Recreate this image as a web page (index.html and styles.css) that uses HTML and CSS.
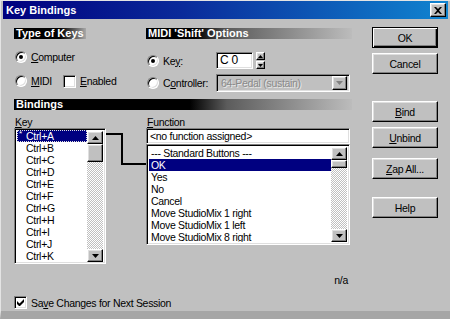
FILE: index.html
```html
<!DOCTYPE html>
<html>
<head>
<meta charset="utf-8">
<link rel="stylesheet" href="styles.css">
</head>
<body>
<div class="window">
  <div class="titlebar">
    <span class="title">Key Bindings</span>
    <span class="close raised"><svg width="8" height="7" viewBox="0 0 8 7"><path d="M0 0h2l2 2 2-2h2L5 3.5 8 7H6L4 5 2 7H0l3-3.5z" fill="#000"/></svg></span>
  </div>
  <div class="content">
    <div class="left">
      <div class="top-row">
        <section class="type">
          <div class="hdr hdr-type">Type of Keys</div>
          <div class="opt opt-computer"><span class="radio on"></span><span><u>C</u>omputer</span></div>
          <div class="opt opt-midi"><span class="radio"></span><span class="midi-txt"><u>M</u>IDI</span><span class="check"></span><span><u>E</u>nabled</span></div>
        </section>
        <section class="midi">
          <div class="hdr hdr-midi">MIDI 'Shift' Options</div>
          <div class="mrow mrow-key">
            <span class="rlabel"><span class="radio on"></span>Ke<u>y</u>:</span>
            <span class="field key-field sunken">C 0</span>
            <span class="spin">
              <span class="spin-btn raised"><svg width="5" height="3" viewBox="0 0 5 3"><path d="M2.5 0L5 3H0z" fill="#000"/></svg></span>
              <span class="spin-btn raised"><svg width="5" height="3" viewBox="0 0 5 3"><path d="M0 0h5L2.5 3z" fill="#000"/></svg></span>
            </span>
          </div>
          <div class="mrow mrow-ctl">
            <span class="rlabel"><span class="radio"></span>C<u>o</u>ntroller:</span>
            <span class="combo sunken"><span class="combo-txt">64-Pedal (sustain)</span><span class="combo-btn raised"><svg width="7" height="4" viewBox="0 0 7 4"><path d="M0 0h7L3.5 4z" fill="#808080"/></svg></span></span>
          </div>
        </section>
      </div>
      <div class="hdr hdr-bind">Bindings</div>
      <div class="bind-area">
        <div class="key-col">
          <div class="lbl"><u>K</u>ey</div>
          <div class="list key-list sunken">
            <div class="items">
              <div class="item sel focus"><span class="mark">*</span>Ctrl+A</div>
              <div class="item"><span class="mark"></span>Ctrl+B</div>
              <div class="item"><span class="mark"></span>Ctrl+C</div>
              <div class="item"><span class="mark"></span>Ctrl+D</div>
              <div class="item"><span class="mark"></span>Ctrl+E</div>
              <div class="item"><span class="mark"></span>Ctrl+F</div>
              <div class="item"><span class="mark"></span>Ctrl+G</div>
              <div class="item"><span class="mark"></span>Ctrl+H</div>
              <div class="item"><span class="mark"></span>Ctrl+I</div>
              <div class="item"><span class="mark"></span>Ctrl+J</div>
              <div class="item"><span class="mark"></span>Ctrl+K</div>
            </div>
            <div class="sbar">
              <span class="sbtn raised"><svg width="7" height="4" viewBox="0 0 7 4"><path d="M3.5 0L7 4H0z" fill="#000"/></svg></span>
              <span class="thumb raised key-thumb"></span>
              <span class="track"></span>
              <span class="sbtn raised"><svg width="7" height="4" viewBox="0 0 7 4"><path d="M0 0h7L3.5 4z" fill="#000"/></svg></span>
            </div>
          </div>
        </div>
        <svg class="connector" width="40" height="50" viewBox="0 0 40 50"><path d="M0 18H16V48H40" fill="none" stroke="#000" stroke-width="2"/></svg>
        <div class="fn-col">
          <div class="lbl"><u>F</u>unction</div>
          <div class="field fn-field sunken">&lt;no function assigned&gt;</div>
          <div class="list fn-list sunken">
            <div class="items">
              <div class="item">--- Standard Buttons ---</div>
              <div class="item sel">OK</div>
              <div class="item">Yes</div>
              <div class="item">No</div>
              <div class="item">Cancel</div>
              <div class="item">Move StudioMix 1 right</div>
              <div class="item">Move StudioMix 1 left</div>
              <div class="item">Move StudioMix 8 right</div>
            </div>
            <div class="sbar">
              <span class="sbtn raised"><svg width="7" height="4" viewBox="0 0 7 4"><path d="M3.5 0L7 4H0z" fill="#000"/></svg></span>
              <span class="thumb raised fn-thumb"></span>
              <span class="track"></span>
              <span class="sbtn raised"><svg width="7" height="4" viewBox="0 0 7 4"><path d="M0 0h7L3.5 4z" fill="#000"/></svg></span>
            </div>
          </div>
        </div>
      </div>
      <div class="status">n/a</div>
      <div class="save"><span class="check checked"><svg width="7" height="7" viewBox="0 0 7 7"><path d="M0 2v3l2 2h1l4-4V0L2.5 4.5z" fill="#000"/></svg></span><span>Sa<u>v</u>e Changes for Next Session</span></div>
    </div>
    <div class="right">
      <span class="btn default">OK</span>
      <span class="btn b-cancel">Cancel</span>
      <span class="btn b-bind"><u>B</u>ind</span>
      <span class="btn b-unbind"><u>U</u>nbind</span>
      <span class="btn b-zap"><u>Z</u>ap All...</span>
      <span class="btn b-help">Help</span>
    </div>
  </div>
</div>
</body>
</html>
```
FILE: styles.css
```css
* { box-sizing: border-box; }
html, body { margin: 0; padding: 0; }
body {
  width: 450px;
  height: 319px;
  overflow: hidden;
  background: #c0c0c0;
  font-family: "Liberation Sans", Arial, sans-serif;
  font-size: 10.5px;
  letter-spacing: -0.3px;
  color: #000;
}
u { text-decoration: underline; text-underline-offset: 1px; }

.window {
  width: 450px;
  height: 319px;
  padding: 1px 2px 0 2px;
  background: #c0c0c0;
  border-left: 1px solid #e4e4e4;
  border-top: 1px solid #e4e4e4;
  border-bottom: 8px solid #a6a6a6;
  display: flex;
  flex-direction: column;
}
.titlebar {
  height: 18px;
  margin-top: -1px;
  background: linear-gradient(90deg, #00007e 0%, #0a2a9a 40%, #1084d0 100%);
  display: flex;
  align-items: center;
  justify-content: space-between;
}
.title {
  color: #fff;
  font-weight: bold;
  font-size: 11px;
  letter-spacing: 0;
  padding-left: 3px;
}
.close {
  width: 16px;
  height: 14px;
  margin-right: 2px;
  background: #c0c0c0;
  display: flex;
  align-items: center;
  justify-content: center;
}

.raised {
  border: 1px solid;
  border-color: #fff #000 #000 #fff;
  box-shadow: inset -1px -1px #808080, inset 1px 1px #dfdfdf;
  background: #c0c0c0;
}
.sunken {
  border: 1px solid;
  border-color: #808080 #fff #fff #808080;
  box-shadow: inset 1px 1px #000, inset -1px -1px #dfdfdf;
  background: #fff;
}

.content {
  display: flex;
  padding-left: 11px;
}
.left {
  width: 338px;
  display: flex;
  flex-direction: column;
  padding-top: 9px;
}

.top-row {
  display: grid;
  grid-template-columns: 132px 206px;
  height: 64px;
}
.hdr {
  height: 11px;
  line-height: 11px;
  color: #fff;
  font-weight: bold;
  font-size: 11px;
  letter-spacing: 0;
  padding-left: 2px;
  white-space: nowrap;
}
.hdr-type {
  width: 72px;
  background: linear-gradient(90deg, #000 0%, #000 64%, #606060 85%, #a8a8a8 100%);
}
.hdr-midi {
  width: 206px;
  background: linear-gradient(90deg, #000 0%, #000 24%, #5c5c5c 40%, #bcbcbc 100%);
}
.hdr-bind {
  width: 338px;
  margin-top: 7px;
  background: linear-gradient(90deg, #000 0%, #000 52%, #5c5c5c 63%, #bcbcbc 100%);
}

.opt {
  display: flex;
  align-items: center;
  height: 16px;
}
.opt-computer { margin-top: 10px; }
.opt-midi { margin-top: 8px; }
.midi-txt { width: 32px; }

.radio {
  width: 12px;
  height: 12px;
  border-radius: 50%;
  background: #fff;
  border: 1px solid;
  border-color: #808080 #fff #fff #808080;
  box-shadow: inset 1px 1px #000, inset -1px -1px #dfdfdf;
  margin: 0 4px 0 1px;
  flex: none;
  display: flex;
  align-items: center;
  justify-content: center;
}
.radio.on::after {
  content: "";
  width: 4px;
  height: 4px;
  border-radius: 50%;
  background: #000;
}
.check {
  width: 13px;
  height: 13px;
  background: #fff;
  border: 1px solid;
  border-color: #808080 #fff #fff #808080;
  box-shadow: inset 1px 1px #000, inset -1px -1px #dfdfdf;
  margin-right: 4px;
  flex: none;
  display: flex;
  align-items: center;
  justify-content: center;
}

.mrow {
  display: flex;
  align-items: center;
}
.mrow-key { margin-top: 13px; height: 17px; }
.mrow-ctl { margin-top: 5px; height: 18px; }
.rlabel {
  width: 70px;
  display: flex;
  align-items: center;
}
.field {
  height: 17px;
  line-height: 15px;
  padding-left: 3px;
  white-space: nowrap;
  overflow: hidden;
}
.key-field { width: 37px; font-size: 12px; }
.spin {
  margin-left: 3px;
  width: 9px;
  height: 17px;
  display: flex;
  flex-direction: column;
  gap: 1px;
}
.spin-btn {
  height: 8px;
  display: flex;
  align-items: center;
  justify-content: center;
}
.combo {
  width: 134px;
  height: 18px;
  background: #c0c0c0;
  display: flex;
  align-items: center;
  justify-content: space-between;
  padding: 2px;
}
.combo-txt {
  color: #8a8a8a;
  text-shadow: 1px 1px #e8e8e8;
  padding-left: 2px;
}
.combo-btn {
  width: 15px;
  height: 14px;
  display: flex;
  align-items: center;
  justify-content: center;
}

.bind-area {
  display: flex;
  margin-top: 6px;
  height: 146px;
}
.lbl {
  height: 12px;
  line-height: 12px;
  padding-left: 1px;
}
.key-col { width: 92px; }
.connector { flex: none; }
.fn-col { width: 204px; display: flex; flex-direction: column; }

.list {
  display: flex;
  padding: 2px;
  overflow: hidden;
}
.key-list { height: 136px; padding-top: 1px; padding-bottom: 1px; }
.fn-field { width: 204px; height: 16px; }
.fn-list { height: 101px; }
.items { flex: 1; overflow: hidden; }
.key-list .items { overflow: visible; }
.item {
  height: 12px;
  line-height: 12px;
  padding-left: 2px;
  white-space: nowrap;
  display: flex;
}
.key-list .item { padding-left: 0; }
.mark {
  width: 9px;
  flex: none;
  font-size: 8px;
  line-height: 8px;
  padding-left: 2px;
}
.item.sel { background: #000080; color: #fff; }
.item.focus { outline: 1px dotted #e0e0e0; outline-offset: -1px; }

.sbar {
  width: 16px;
  flex: none;
  display: flex;
  flex-direction: column;
}
.key-list .sbar { margin-top: 1px; }
.sbtn {
  height: 13px;
  flex: none;
  display: flex;
  align-items: center;
  justify-content: center;
}
.thumb { flex: none; }
.key-thumb { height: 18px; }
.fn-thumb { height: 8px; }
.track {
  flex: 1;
  background-image: conic-gradient(#fff 25%, #c0c0c0 0 50%, #fff 0 75%, #c0c0c0 0);
  background-size: 2px 2px;
}

.status {
  margin-top: 12px;
  height: 12px;
  line-height: 12px;
  text-align: right;
  padding-right: 4px;
}
.save {
  margin-top: 10px;
  height: 13px;
  display: flex;
  align-items: center;
}
.save .check { margin-right: 4px; }

.right {
  margin-left: 20px;
  width: 66px;
  padding-top: 8px;
  display: flex;
  flex-direction: column;
}
.btn {
  height: 21px;
  display: flex;
  align-items: center;
  justify-content: center;
  border: 1px solid;
  border-color: #fff #000 #000 #fff;
  box-shadow: inset -1px -1px #808080, inset 1px 1px #dfdfdf;
  background: #c0c0c0;
}
.btn.default {
  border: 1px solid #000;
  box-shadow: inset 1px 1px #fff, inset -1px -1px #000, inset -2px -2px #808080;
}
.b-cancel { margin-top: 5px; }
.b-bind { margin-top: 27px; }
.b-unbind { margin-top: 5px; }
.b-zap { margin-top: 10px; }
.b-help { margin-top: 18px; }
```
